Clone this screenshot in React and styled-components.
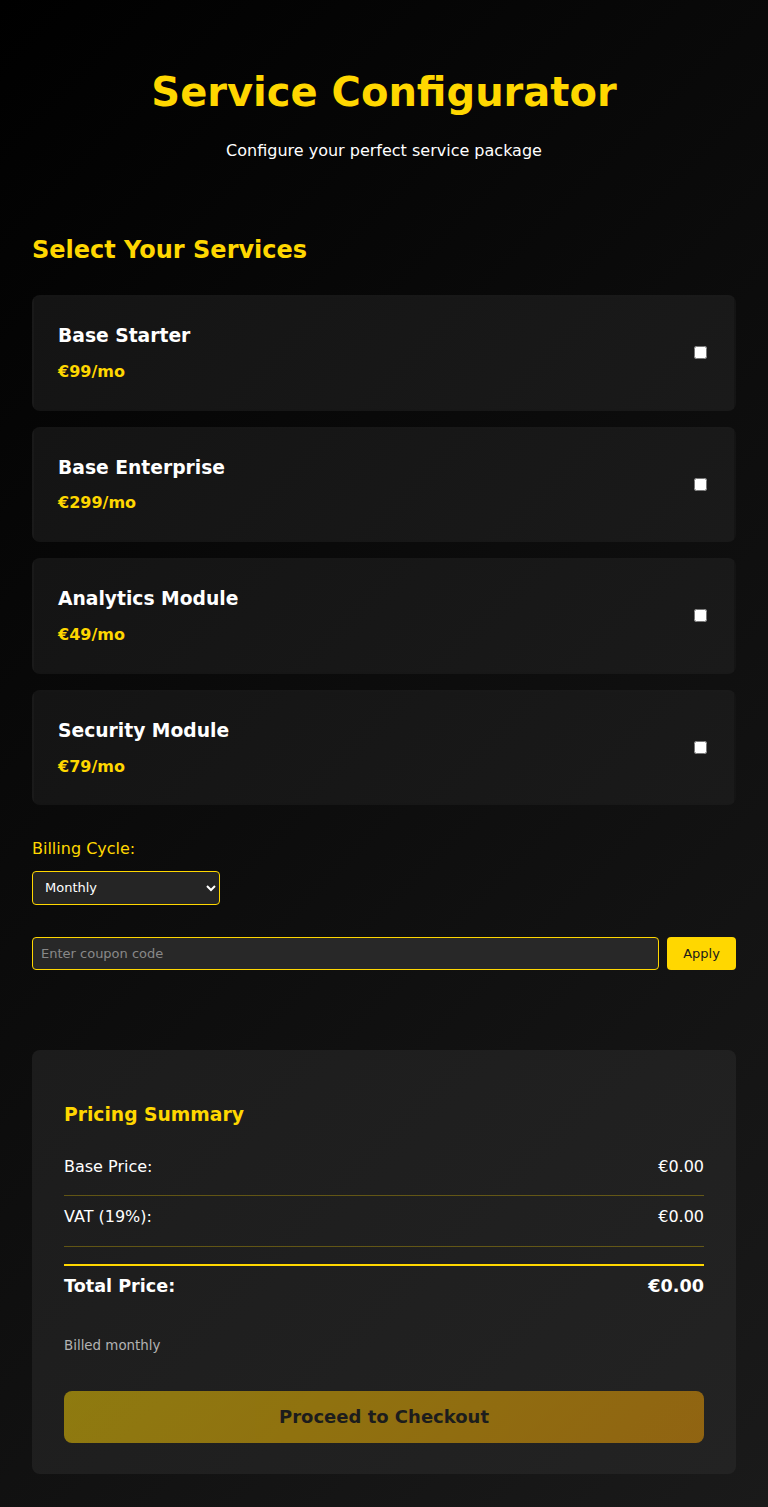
import React, { useState } from 'react';
import styled, { createGlobalStyle } from 'styled-components';

const services = [
    { id: 'starter', name: 'Base Starter', price: 99 },
    { id: 'enterprise', name: 'Base Enterprise', price: 299 },
    { id: 'analytics', name: 'Analytics Module', price: 49 },
    { id: 'security', name: 'Security Module', price: 79 },
];

const App = () => {
    const [selected, setSelected] = useState({});
    const [cycle, setCycle] = useState('monthly');

    const base = services.reduce((sum, s) => (selected[s.id] ? sum + s.price : sum), 0);
    const vat = base * 0.19;

    return (
        <>
            <GlobalStyle />
            <Page>
                <Header>
                    <Title>Service Configurator</Title>
                    <Subtitle>Configure your perfect service package</Subtitle>
                </Header>

                <SectionTitle>Select Your Services</SectionTitle>
                <ServiceList>
                    {services.map((s) => (
                        <ServiceCard key={s.id} $active={!!selected[s.id]}>
                            <div>
                                <ServiceName>{s.name}</ServiceName>
                                <ServicePrice>€{s.price}/mo</ServicePrice>
                            </div>
                            <input
                                type="checkbox"
                                checked={!!selected[s.id]}
                                onChange={() => setSelected({ ...selected, [s.id]: !selected[s.id] })}
                            />
                        </ServiceCard>
                    ))}
                </ServiceList>

                <FieldLabel htmlFor="cycle">Billing Cycle:</FieldLabel>
                <Select id="cycle" value={cycle} onChange={(e) => setCycle(e.target.value)}>
                    <option value="monthly">Monthly</option>
                    <option value="quarterly">Quarterly</option>
                    <option value="yearly">Yearly</option>
                </Select>

                <CouponRow>
                    <CouponInput placeholder="Enter coupon code" />
                    <ApplyButton>Apply</ApplyButton>
                </CouponRow>

                <Summary>
                    <SummaryTitle>Pricing Summary</SummaryTitle>
                    <SummaryRow>
                        <span>Base Price:</span>
                        <span>€{base.toFixed(2)}</span>
                    </SummaryRow>
                    <SummaryRow>
                        <span>VAT (19%):</span>
                        <span>€{vat.toFixed(2)}</span>
                    </SummaryRow>
                    <TotalRow>
                        <span>Total Price:</span>
                        <span>€{(base + vat).toFixed(2)}</span>
                    </TotalRow>
                    <BilledNote>Billed {cycle}</BilledNote>
                    <CheckoutButton disabled={base === 0}>Proceed to Checkout</CheckoutButton>
                </Summary>
            </Page>
        </>
    );
};

const GlobalStyle = createGlobalStyle`
    * { box-sizing: border-box; }
    body {
        margin: 0;
        min-height: 100vh;
        font-family: "DejaVu Sans", Verdana, sans-serif;
        line-height: 1.6;
        color: #fff;
        background: linear-gradient(135deg, #000 0%, #1a1a1a 100%);
        background-attachment: fixed;
    }
`;

const Page = styled.div`
    max-width: 768px;
    margin: 0 auto;
    padding: 68px 32px 33px;
`;

const Header = styled.header`
    text-align: center;
`;

const Title = styled.h1`
    margin: 0;
    font-size: 40px;
    line-height: 48px;
    font-weight: bold;
    color: #ffd700;
`;

const Subtitle = styled.p`
    margin: 22px 0 0;
    font-size: 16px;
    color: #fff;
`;

const SectionTitle = styled.h2`
    margin: 67px 0 26px;
    font-size: 24px;
    color: #ffd700;
`;

const ServiceList = styled.div`
    display: flex;
    flex-direction: column;
    gap: 16px;
`;

const ServiceCard = styled.label`
    display: flex;
    align-items: center;
    justify-content: space-between;
    padding: 24px;
    border: 2px solid ${(p) => (p.$active ? '#ffd700' : 'transparent')};
    border-radius: 8px;
    background: linear-gradient(135deg, #141414 0%, #1a1a1a 100%);
    cursor: pointer;

    input {
        margin: 3px 3px 3px 4px;
        cursor: pointer;
    }
`;

const ServiceName = styled.div`
    font-size: 18.72px;
    font-weight: bold;
    margin-bottom: 8px;
`;

const ServicePrice = styled.div`
    font-size: 16px;
    font-weight: bold;
    color: #ffd700;
`;

const FieldLabel = styled.label`
    display: block;
    margin-top: 31px;
    font-size: 16px;
    color: #ffd700;
`;

const Select = styled.select`
    display: block;
    width: 188px;
    height: 34px;
    margin-top: 9px;
    padding: 0 8px;
    font-family: inherit;
    font-size: 13px;
    color: #fff;
    background: #252525;
    border: 1px solid #ffd700;
    border-radius: 4px;
`;

const CouponRow = styled.div`
    display: flex;
    gap: 8px;
    margin-top: 32px;
`;

const CouponInput = styled.input`
    flex: 1;
    height: 33px;
    padding: 0 8px;
    font-family: inherit;
    font-size: 13px;
    color: #fff;
    background: #282828;
    border: 1px solid #ffd700;
    border-radius: 4px;

    &::placeholder { color: #888; }
`;

const ApplyButton = styled.button`
    width: 69px;
    height: 33px;
    font-family: inherit;
    font-size: 13px;
    color: #1a1a1a;
    background: #ffd700;
    border: none;
    border-radius: 4px;
    cursor: pointer;
`;

const Summary = styled.section`
    margin-top: 80px;
    padding: 50px 32px 31px;
    border-radius: 8px;
    background: linear-gradient(135deg, #1c1c1c 0%, #232323 100%);
`;

const SummaryTitle = styled.h3`
    margin: 0 0 16px;
    font-size: 18.72px;
    line-height: 30px;
    color: #ffd700;
`;

const SummaryRow = styled.div`
    display: flex;
    justify-content: space-between;
    font-size: 16px;
    padding: 8px 0 16px;
    border-bottom: 1px solid rgba(255, 215, 0, 0.3);
`;

const TotalRow = styled.div`
    display: flex;
    justify-content: space-between;
    margin-top: 17px;
    padding-top: 6px;
    border-top: 2px solid #ffd700;
    font-size: 17.6px;
    line-height: 28px;
    font-weight: bold;
`;

const BilledNote = styled.p`
    margin: 35px 0 0;
    font-size: 13.4px;
    line-height: 22px;
    color: #b3b3b3;
`;

const CheckoutButton = styled.button`
    display: block;
    width: 100%;
    height: 52px;
    margin-top: 34px;
    font-family: inherit;
    font-size: 18px;
    font-weight: bold;
    color: #1a1a1a;
    background: linear-gradient(135deg, #ffd700 0%, #ffa500 100%);
    border: none;
    border-radius: 8px;
    cursor: pointer;

    &:disabled {
        opacity: 0.5;
        cursor: not-allowed;
    }
`;

export default App;
